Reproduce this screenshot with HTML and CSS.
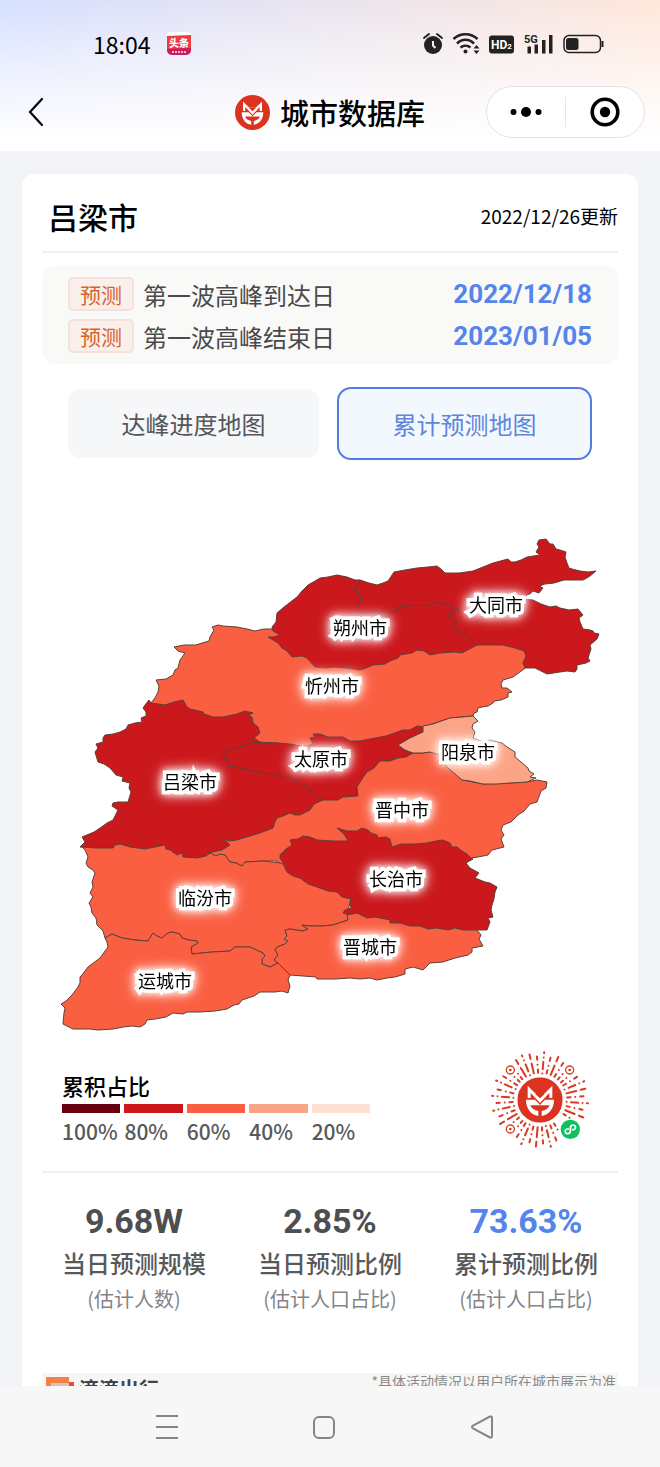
FILE: index.html
```html
<!DOCTYPE html>
<html lang="zh-CN">
<head>
    <meta charset="UTF-8">
    <meta name="viewport" content="width=device-width, initial-scale=1.0">
    <title>城市数据库</title>
    <link rel="stylesheet" href="styles.css">
</head>
<body>
    <svg class="defs" width="0" height="0" aria-hidden="true">
        <symbol id="fox" viewBox="0 0 136 136">
            <circle cx="68" cy="68" r="68" fill="#dc3220"/>
            <path fill="#fff" d="M31 25L56 50H80L105 25V62H96V47L68 77L40 47V62H31Z"/>
            <path fill="#dc3220" d="M54 50H82L68 63Z"/>
            <path fill="#fff" d="M26 67H53L68 83L83 67H110C110 94 95 112 73 116V101C85 99 93 94 97 84H39C43 94 51 99 63 101V116C41 112 26 94 26 67Z"/>
        </symbol>
    </svg>

    <header class="header">
        <div class="status-bar">
            <div class="status-left">
                <span class="time">18:04</span>
                <svg class="app-icon" viewBox="0 0 24 24">
                    <rect width="24" height="23" rx="4" fill="#fff"/>
                    <path d="M0 4L24 3V18H0Z" fill="#f03a45"/>
                    <path d="M0 17L24 16V19Q23 23 19 23H5Q1 23 0 19Z" fill="#c81d62"/>
                    <text x="12" y="15" class="app-name">头条</text>
                    <path d="M5 20H20" stroke="#f5b5cc" stroke-width="2" stroke-dasharray="2 1"/>
                </svg>
            </div>
            <svg class="status-icons" viewBox="422 30 184 28">
                <circle cx="433" cy="45" r="9" fill="#222"/>
                <path d="M424 38L429 34M437 34L442 38" stroke="#222" stroke-width="2" stroke-linecap="round"/>
                <path d="M433 41V45.5L435.5 48" fill="none" stroke="#f4eaf0" stroke-width="2"/>
                <g fill="none" stroke="#222" stroke-width="2.5">
                    <path d="M453.5 39C460 32.5 471 32.5 477.5 39"/>
                    <path d="M457 43.5C462 38.5 469 38.5 474 43.5"/>
                    <path d="M460.5 47.5C463.5 45 467.5 45 470.5 47.5"/>
                </g>
                <circle cx="465.5" cy="51.5" r="2" fill="#222"/>
                <path d="M473.5 48.5L476.5 45L479.5 48.5ZM473.5 50.5L476.5 54L479.5 50.5Z" fill="#222"/>
                <rect x="489" y="35.5" width="25" height="18" rx="3" fill="#222"/>
                <text x="491" y="49" class="hd">HD<tspan class="hd-sub">2</tspan></text>
                <text x="524" y="43" class="net">5G</text>
                <path d="M527.5 46.5H531V53.5H527.5ZM534.5 44.5H538V53.5H534.5ZM542 40H545.5V53.5H542ZM549 35H552.5V53.5H549Z" fill="#222"/>
                <rect x="564" y="35.5" width="36.5" height="17" rx="5" fill="none" stroke="#222" stroke-width="1.5"/>
                <rect x="566" y="38" width="12.5" height="12" rx="2.5" fill="#222"/>
                <path d="M602.5 41V47" stroke="#222" stroke-width="2"/>
            </svg>
        </div>
        <div class="title-bar">
            <button class="back" aria-label="返回">
                <svg width="16" height="30" viewBox="0 0 16 30"><path d="M14 2L2 15L14 28" fill="none" stroke="#000" stroke-width="2.2" stroke-linecap="round"/></svg>
            </button>
            <div class="brand">
                <svg class="brand-logo"><use href="#fox"/></svg>
                <h1 class="brand-name">城市数据库</h1>
            </div>
            <div class="capsule">
                <button class="capsule-btn" aria-label="更多">
                    <svg width="32" height="12" viewBox="0 0 32 12"><circle cx="3.5" cy="6" r="3"/><circle cx="16" cy="6" r="5"/><circle cx="28.5" cy="6" r="3"/></svg>
                </button>
                <button class="capsule-btn" aria-label="关闭">
                    <svg width="30" height="30" viewBox="0 0 30 30"><circle cx="15" cy="15" r="12.8" fill="none" stroke="#000" stroke-width="3.6"/><circle cx="15" cy="15" r="5.2"/></svg>
                </button>
            </div>
        </div>
    </header>

    <main class="content">
        <section class="card">
            <div class="card-head">
                <h2 class="city">吕梁市</h2>
                <span class="updated">2022/12/26更新</span>
            </div>

            <div class="peaks">
                <div class="peak">
                    <span class="tag">预测</span>
                    <span class="peak-name">第一波高峰到达日</span>
                    <span class="peak-date">2022/12/18</span>
                </div>
                <div class="peak">
                    <span class="tag">预测</span>
                    <span class="peak-name">第一波高峰结束日</span>
                    <span class="peak-date">2023/01/05</span>
                </div>
            </div>

            <div class="tabs">
                <button class="tab">达峰进度地图</button>
                <button class="tab active">累计预测地图</button>
            </div>

            <svg class="map" viewBox="42 530 576 510">
                <g class="regions">
                    <!-- 忻州 -->
                    <path class="l60" d="M273 629L264 629L255 631L247 629L237 627L223 626L218 625L212 627L214 630L210 637L209 641L202 643L196 645L184 645L174 647L178 651L185 653L180 660L178 668L175 670L173 675L166 679L156 680L159 686L158 692L155 698L151 703L165 710L190 720L235 725L240 740L258 742L277 743L300 750L330 745L350 745L370 742L403 733L423 727L450 718L473 716L474 713L477 712L478 708L482 707L488 706L493 703L494 701L501 700L508 697L508 693L512 692L507 688L502 688L501 684L503 680L513 677L524 669L540 655L500 630L300 625Z"/>
                    <!-- 大同 -->
                    <path class="l80" d="M360 580L369 583L377 585L383 583L388 581L394 572L405 570L417 568L428 567L437 566L441 569L445 573L459 573L473 571L483 567L493 563L508 559L511 562L515 562L521 560L527 557L540 555L536 552L539 547L537 544L539 540L546 539L550 544L553 544L556 549L560 550L566 552L565 557L567 563L569 568L572 569L580 571L588 572L596 571L590 576L585 579L583 580L572 580L564 580L554 583L545 584L542 585L540 587L543 588L539 593L533 591L530 594L527 595L523 599L533 600L541 604L550 607L556 606L560 608L569 610L578 609L583 615L579 618L580 622L583 629L590 630L593 631L594 633L599 634L597 639L590 645L591 649L588 658L590 661L586 663L577 665L577 669L575 672L567 671L560 672L547 674L535 668L525 668L523 663L526 656L524 651L515 648L503 645L490 645L477 645L440 630L350 610L345 585Z"/>
                    <!-- 朔州 -->
                    <path class="l80" d="M272 627L276 622L277 613L284 607L297 597L302 591L308 585L315 581L320 578L328 577L337 575L347 577L355 580L360 580L360 584L357 585L354 590L361 597L360 602L358 605L357 612L392 612L397 610L400 607L413 605L428 606L437 602L448 606L460 610L448 613L448 617L454 618L457 622L452 625L455 629L467 635L472 641L477 645L462 653L455 652L440 653L430 655L424 651L417 650L412 653L400 655L398 658L390 661L385 664L373 665L366 668L360 670L346 668L333 667L326 668L315 667L307 658L302 656L292 657L287 651L282 648L278 643L268 637L274 637L280 635L273 631Z"/>
                    <!-- 吕梁 -->
                    <path class="l80" d="M149 700L145 705L143 708L146 712L146 716L141 718L142 722L135 723L128 725L126 729L120 732L113 734L105 735L103 738L103 742L96 744L98 748L95 752L98 762L104 764L110 768L116 775L123 777L122 781L130 783L129 788L131 792L128 802L118 802L113 803L112 806L118 810L113 820L107 823L100 828L94 832L82 837L85 842L80 847L96 848L113 848L115 845L120 844L130 847L145 849L165 845L166 849L170 850L177 855L182 853L183 857L197 858L206 856L210 853L222 850L230 845L226 841L222 839L230 841L237 840L250 836L260 833L273 828L275 822L277 818L283 816L290 813L295 815L300 815L310 810L314 804L330 800L300 770L254 738L260 733L258 727L253 723L252 717L248 715L253 713L245 711L237 714L223 717L213 717L204 714L203 712L190 709L187 707L183 700L174 702L165 705L151 703Z"/>
                    <!-- 太原 -->
                    <path class="l80" d="M223 753L228 750L237 748L247 745L253 742L263 743L277 743L290 744L300 746L307 746L313 744L310 738L315 737L313 734L320 734L328 737L337 737L343 737L350 741L360 741L370 739L386 736L403 730L410 730L417 726L423 727L423 732L417 735L410 738L398 745L405 750L413 753L410 757L398 758L390 761L380 761L374 768L367 772L362 779L357 787L358 796L343 797L338 800L323 800L316 795L313 792L305 787L298 782L290 778L283 777L275 774L260 773L250 770L240 768L232 766L227 767L228 762L225 759Z"/>
                    <!-- 晋中 -->
                    <path class="l60" d="M323 800L338 800L343 797L358 796L357 787L362 779L367 772L374 768L380 761L390 761L398 758L406 757L413 753L422 753L430 752L440 752L447 767L455 774L462 780L483 784L510 783L527 782L537 780L547 782L546 788L541 791L537 802L530 804L524 811L518 815L511 822L503 825L501 830L504 835L501 839L504 847L492 850L488 855L478 857L470 858L465 862L460 890L350 890L283 865L276 861L263 861L245 862L242 866L236 863L230 862L225 855L216 856L208 853L222 850L230 845L226 841L222 839L230 841L237 840L250 836L260 833L273 828L275 822L277 818L283 816L290 813L295 815L300 815L310 810L314 804Z"/>
                    <!-- 阳泉 -->
                    <path class="l40" d="M398 745L410 738L423 732L423 726L433 724L450 718L462 717L473 716L478 721L473 724L472 728L475 732L473 738L481 741L490 740L502 743L507 747L515 752L515 757L521 762L528 768L529 771L534 774L530 777L536 778L527 782L510 783L497 784L483 784L470 781L462 780L455 774L447 767L440 755L430 752L422 753L413 753L405 750Z"/>
                    <!-- 临汾 -->
                    <path class="l60" d="M82 847L96 848L113 848L115 845L120 844L130 847L145 849L165 845L166 849L170 850L177 855L182 853L183 857L197 858L206 856L210 853L216 856L220 854L225 855L230 862L236 863L242 866L245 862L263 861L280 863L320 880L351 899L347 914L348 920L333 925L322 926L310 926L302 925L308 929L303 931L290 929L285 930L287 936L284 939L288 941L285 944L277 947L275 950L278 955L274 960L278 963L270 967L262 964L262 959L265 956L263 953L250 947L235 947L230 951L212 952L192 954L191 947L198 943L197 941L189 940L182 938L180 934L172 932L168 933L162 938L157 936L153 933L148 941L135 940L122 938L112 934L105 938L103 931L97 925L96 918L92 913L91 907L89 903L93 897L90 893L93 887L92 882L95 873L93 870L88 867L86 863L88 857L85 850Z"/>
                    <!-- 长治 -->
                    <path class="l80" d="M283 863L280 858L280 855L286 849L292 845L290 840L298 839L303 836L310 837L317 840L333 841L348 841L344 834L337 828L347 831L357 831L362 828L368 830L371 833L377 835L378 838L386 837L390 839L392 847L401 844L415 844L427 843L436 841L443 840L450 843L452 847L457 847L462 851L467 854L471 858L473 859L466 863L470 868L479 873L475 878L485 882L490 883L497 887L495 892L494 899L492 905L491 910L493 917L488 918L490 922L487 930L475 930L463 930L455 928L448 930L437 928L428 929L420 926L410 926L400 923L390 923L390 920L375 917L367 918L357 913L350 915L343 913L345 910L351 908L350 903L351 899L342 897L337 892L328 891L317 887L308 884L300 878L293 876L287 872L285 868Z"/>
                    <!-- 晋城 -->
                    <path class="l60" d="M278 963L274 960L278 955L275 950L277 947L285 944L288 941L284 939L287 936L285 930L290 929L303 931L308 929L302 925L310 926L322 926L333 925L348 920L347 915L357 913L367 918L375 917L390 920L390 923L400 923L410 926L420 926L428 929L437 928L448 930L455 928L463 930L477 930L481 935L479 939L483 946L472 948L472 952L468 955L455 958L443 962L430 963L427 966L423 970L413 967L405 969L405 974L395 977L387 978L377 980L370 978L360 979L350 978L335 979L317 979L316 977L303 976L290 975L284 969Z"/>
                    <!-- 运城 -->
                    <path class="l60" d="M105 938L112 934L122 938L135 940L148 941L153 933L157 936L162 938L168 933L172 932L180 934L182 938L189 940L197 941L198 943L191 947L192 954L212 952L230 951L235 947L250 947L263 953L265 956L262 959L262 964L270 967L278 963L284 969L290 975L288 980L290 986L288 993L282 991L275 992L260 992L254 996L242 1000L239 1004L234 1005L227 1009L215 1011L200 1012L187 1012L183 1014L173 1013L166 1017L155 1019L147 1020L145 1024L140 1027L132 1026L123 1027L113 1029L98 1030L90 1029L73 1029L63 1024L64 1013L65 1008L61 1004L66 1001L72 995L78 987L80 983L80 977L82 975L88 967L100 958L108 947L107 942Z"/>
                </g>
                <g class="names">
                    <text x="496" y="612">大同市</text>
                    <text x="360" y="635">朔州市</text>
                    <text x="332" y="693">忻州市</text>
                    <text x="321" y="766">太原市</text>
                    <text x="468" y="759">阳泉市</text>
                    <text x="190" y="789">吕梁市</text>
                    <text x="402" y="817">晋中市</text>
                    <text x="396" y="886">长治市</text>
                    <text x="205" y="905">临汾市</text>
                    <text x="370" y="954">晋城市</text>
                    <text x="165" y="988">运城市</text>
                </g>
            </svg>

            <div class="legend-row">
                <div class="legend">
                    <h3 class="legend-title">累积占比</h3>
                    <ul class="scale">
                        <li class="step s100">100%</li>
                        <li class="step s80">80%</li>
                        <li class="step s60">60%</li>
                        <li class="step s40">40%</li>
                        <li class="step s20">20%</li>
                    </ul>
                </div>
                <svg class="qr" viewBox="30 30 300 300">
                    <defs>
                        <path id="a" d="M0-82v-10M0-106v0M0-121v-10"/>
                        <path id="b" d="M0-80v0M0-93v-22M0-128v0M0-141v-3"/>
                        <path id="c" d="M0-82v-30M0-126v-14"/>
                        <path id="d" d="M0-82v-8M0-103v0"/>
                    </defs>
                    <g transform="translate(180 180)" fill="none" stroke="#d83a22" stroke-width="6" stroke-linecap="round">
                        <use href="#b" transform="rotate(5)"/><use href="#a" transform="rotate(14)"/><use href="#c" transform="rotate(23)"/><use href="#a" transform="rotate(32)"/>
                        <use href="#d" transform="rotate(41)"/><use href="#d" transform="rotate(50)"/><use href="#a" transform="rotate(58)"/><use href="#b" transform="rotate(67)"/>
                        <use href="#c" transform="rotate(76)"/><use href="#a" transform="rotate(85)"/><use href="#b" transform="rotate(94)"/><use href="#a" transform="rotate(103)"/>
                        <use href="#c" transform="rotate(112)"/><use href="#d" transform="rotate(121)"/><use href="#d" transform="rotate(149)"/><use href="#a" transform="rotate(158)"/>
                        <use href="#b" transform="rotate(167)"/><use href="#a" transform="rotate(176)"/><use href="#c" transform="rotate(185)"/><use href="#a" transform="rotate(194)"/>
                        <use href="#b" transform="rotate(203)"/><use href="#a" transform="rotate(212)"/><use href="#d" transform="rotate(220)"/><use href="#d" transform="rotate(230)"/>
                        <use href="#c" transform="rotate(239)"/><use href="#a" transform="rotate(248)"/><use href="#b" transform="rotate(257)"/><use href="#a" transform="rotate(266)"/>
                        <use href="#b" transform="rotate(275)"/><use href="#a" transform="rotate(284)"/><use href="#b" transform="rotate(294)"/><use href="#a" transform="rotate(303)"/>
                        <use href="#d" transform="rotate(312)"/><use href="#d" transform="rotate(320)"/><use href="#c" transform="rotate(329)"/><use href="#b" transform="rotate(338)"/>
                        <use href="#c" transform="rotate(347)"/><use href="#a" transform="rotate(356)"/>
                    </g>
                    <g fill="#fff" stroke="#d83a22" stroke-width="4">
                        <circle cx="91" cy="90" r="12"/><circle cx="269" cy="90" r="12"/><circle cx="91" cy="267" r="12"/>
                    </g>
                    <g fill="#d83a22">
                        <circle cx="91" cy="90" r="4"/><circle cx="269" cy="90" r="4"/><circle cx="91" cy="267" r="4"/>
                    </g>
                    <use href="#fox" x="112" y="112" width="136" height="136"/>
                    <circle cx="271" cy="268" r="29" fill="#0fc060"/>
                    <path d="M265 267C254 265 252 280 262 281C268 281 271 278 271 272V264C271 258 274 255 280 255C290 256 288 271 277 269" fill="none" stroke="#fff" stroke-width="5" stroke-linecap="round"/>
                </svg>
            </div>

            <div class="stats">
                <div class="stat">
                    <strong class="stat-num">9.68W</strong>
                    <span class="stat-name">当日预测规模</span>
                    <span class="stat-note">(估计人数)</span>
                </div>
                <div class="stat">
                    <strong class="stat-num">2.85%</strong>
                    <span class="stat-name">当日预测比例</span>
                    <span class="stat-note">(估计人口占比)</span>
                </div>
                <div class="stat">
                    <strong class="stat-num blue">73.63%</strong>
                    <span class="stat-name">累计预测比例</span>
                    <span class="stat-note">(估计人口占比)</span>
                </div>
            </div>

            <div class="partner">
                <div class="partner-brand">
                    <svg width="29" height="24" viewBox="0 0 29 24"><path d="M0 0H23V5H28V22H0Z" fill="#f57f45"/><path d="M5 6H23V22H5Z" fill="#c9c9c4"/><path d="M23 5H28V22H23Z" fill="#d9542c"/></svg>
                    <span>滴滴出行</span>
                </div>
                <span class="partner-note">*具体活动情况以用户所在城市展示为准</span>
            </div>
        </section>
    </main>

    <nav class="system-nav">
        <button aria-label="菜单"><svg width="24" height="28" viewBox="0 0 24 28"><path d="M1 3H23M1 14H23M1 25H23"/></svg></button>
        <button aria-label="主页"><svg width="24" height="28" viewBox="0 0 24 28"><rect x="2" y="4" width="20" height="21" rx="5"/></svg></button>
        <button aria-label="后退"><svg width="24" height="28" viewBox="0 0 24 28"><path d="M20 3.5Q22 3 22 5V23Q22 25 20 24.5L3 15.5Q1 14 3 12.5Z"/></svg></button>
    </nav>
</body>
</html>
```

FILE: styles.css
```css
* {
    box-sizing: border-box;
}
body {
    margin: 0;
    height: 100vh;
    display: flex;
    flex-direction: column;
    background-color: #f3f4f8;
    font-family: "Noto Sans CJK SC", sans-serif;
    color: #000;
}
h1, h2, h3, ul {
    margin: 0;
    padding: 0;
    font-weight: 500;
}
button {
    border: none;
    background: none;
    padding: 0;
    font-family: inherit;
    cursor: pointer;
}
svg {
    display: block;
}
.defs {
    position: absolute;
}

/* header */
.header {
    flex: none;
    height: 151px;
    background: linear-gradient(to bottom, rgba(255, 255, 255, 0) 0, rgba(255, 255, 255, 0.6) 50%, #fff 92%), linear-gradient(to right, #d5dfff 0, #e9e4f0 48%, #ffe6da 100%);
}
.status-bar {
    display: flex;
    justify-content: space-between;
    align-items: center;
    height: 74px;
    padding: 14px 54px 0 93px;
}
.status-left {
    display: flex;
    align-items: center;
    gap: 17px;
}
.time {
    font-size: 23px;
    line-height: 28px;
}
.app-icon {
    width: 24px;
    height: 24px;
}
.app-name {
    font-size: 10px;
    font-weight: 900;
    fill: #fff;
    text-anchor: middle;
}
.status-icons {
    width: 184px;
    height: 28px;
}
.hd, .net {
    font-family: Roboto, sans-serif;
    font-weight: bold;
}
.hd {
    font-size: 12px;
    fill: #fff;
}
.hd-sub {
    font-size: 8px;
}
.net {
    font-size: 11px;
    fill: #222;
}
.title-bar {
    display: grid;
    grid-template-columns: 1fr auto 1fr;
    align-items: center;
    height: 76px;
    padding: 0 15px;
}
.back {
    justify-self: start;
    margin-left: 13px;
}
.brand {
    display: flex;
    align-items: center;
    gap: 10px;
}
.brand-logo {
    width: 35px;
    height: 35px;
}
.brand-name {
    font-size: 29px;
    line-height: 40px;
}
.capsule {
    justify-self: end;
    display: flex;
    width: 100%;
    max-width: 159px;
    height: 52px;
    border: 1px solid #e3e3e5;
    border-radius: 26px;
    background-color: #fff;
}
.capsule-btn {
    flex: 1;
    display: flex;
    align-items: center;
    justify-content: center;
    margin: 10px 0;
}
.capsule-btn + .capsule-btn {
    border-left: 1px solid #e6e6e6;
}

/* card */
.content {
    flex: 1;
    min-height: 0;
    overflow: hidden;
    padding: 23px 22px 0;
}
.card {
    background-color: #fff;
    border-radius: 12px;
    padding: 0 20px;
}
.card-head {
    display: flex;
    justify-content: space-between;
    align-items: center;
    height: 79px;
    padding: 6px 0 0 6px;
    border-bottom: 2px solid #efefef;
}
.city {
    font-size: 30px;
    line-height: 40px;
}
.updated {
    font-size: 19px;
    line-height: 28px;
}
.peaks {
    display: flex;
    flex-direction: column;
    gap: 8px;
    margin-top: 13px;
    padding: 11px 26px;
    border-radius: 14px;
    background-color: #f9f9f8;
}
.peak {
    display: flex;
    align-items: center;
    height: 34px;
}
.tag {
    width: 66px;
    height: 34px;
    border: 2px solid #f5e0dc;
    border-radius: 5px;
    background-color: #f9efeb;
    color: #d9622b;
    font-size: 21px;
    line-height: 30px;
    text-align: center;
}
.peak-name {
    margin-left: 9px;
    font-size: 24px;
    color: #4a4a4c;
}
.peak-date {
    margin-left: auto;
    font-family: Roboto, sans-serif;
    font-size: 26px;
    font-weight: bold;
    color: #5585ea;
}
.tabs {
    display: flex;
    gap: 16px;
    margin-top: 23px;
    padding: 0 26px 0 24px;
}
.tab {
    flex: 1;
    height: 73px;
    border: 2px solid #fff;
    border-radius: 14px;
    background-color: #f6f7f9;
    font-size: 24px;
    color: #55565a;
}
.tab.active {
    border-color: #4f7fd9;
    background-color: #f3f8fe;
    color: #5d87db;
}

/* map */
.map {
    width: 100%;
    margin-top: 70px;
}
.regions path {
    stroke: #5e4038;
    stroke-width: 1;
    stroke-linejoin: round;
}
.l80 {
    fill: #cb181c;
}
.l60 {
    fill: #fa5f42;
}
.l40 {
    fill: #fca486;
}
.names text {
    font-size: 18px;
    text-anchor: middle;
    fill: #000;
    stroke: #fff;
    stroke-width: 7px;
    stroke-linejoin: miter;
    paint-order: stroke;
    filter: drop-shadow(0 0 3px rgba(255, 255, 255, 0.6)) drop-shadow(0 0 6px #fff);
}

/* legend */
.legend-row {
    display: flex;
    justify-content: space-between;
    padding: 10px 28px 21px 20px;
    border-bottom: 2px solid #efefef;
}
.legend {
    width: 308px;
    padding-top: 19px;
}
.legend-title {
    font-size: 22px;
    line-height: 32px;
}
.scale {
    display: flex;
    gap: 4px;
    list-style: none;
    margin-top: 3px;
}
.step {
    flex: 1 1 0;
    min-width: 0;
    border-top: 9px solid;
    font-size: 21px;
    font-weight: 500;
    line-height: 36px;
    color: #58595b;
}
.s100 {
    border-top-color: #67000d;
}
.s80 {
    border-top-color: #cb181d;
}
.s60 {
    border-top-color: #fa5f42;
}
.s40 {
    border-top-color: #fca486;
}
.s20 {
    border-top-color: #fee0d2;
}
.qr {
    width: 100px;
    height: 100px;
}

/* stats */
.stats {
    display: flex;
    justify-content: space-between;
    padding: 26px 20px 0;
}
.stat {
    display: flex;
    flex-direction: column;
    align-items: center;
    width: 144px;
    white-space: nowrap;
}
.stat-num {
    font-family: Roboto, sans-serif;
    font-size: 34px;
    line-height: 44px;
    color: #4d4e50;
}
.stat-num.blue {
    color: #5585ea;
}
.stat-name {
    font-size: 24px;
    font-weight: 500;
    line-height: 40px;
    color: #58595b;
}
.stat-note {
    font-size: 20px;
    line-height: 32px;
    color: #848587;
}

/* partner */
.partner {
    display: flex;
    justify-content: space-between;
    align-items: flex-start;
    height: 60px;
    margin-top: 58px;
    padding: 0 2px 0 4px;
    background-color: #f6f6f6;
}
.partner-brand {
    display: flex;
    gap: 4px;
    padding-top: 4px;
    font-size: 20px;
    font-weight: bold;
    line-height: 24px;
    color: #444;
}
.partner-note {
    font-size: 14px;
    line-height: 16px;
    color: #8a8a8a;
}

/* system nav */
.system-nav {
    flex: none;
    display: grid;
    grid-template-columns: repeat(3, 1fr);
    height: 81px;
    padding: 0 99px 0 88px;
    background-color: #f7f7f7;
}
.system-nav button {
    display: flex;
    align-items: center;
    justify-content: center;
}
.system-nav svg {
    fill: none;
    stroke: #858585;
    stroke-width: 2;
}
```
